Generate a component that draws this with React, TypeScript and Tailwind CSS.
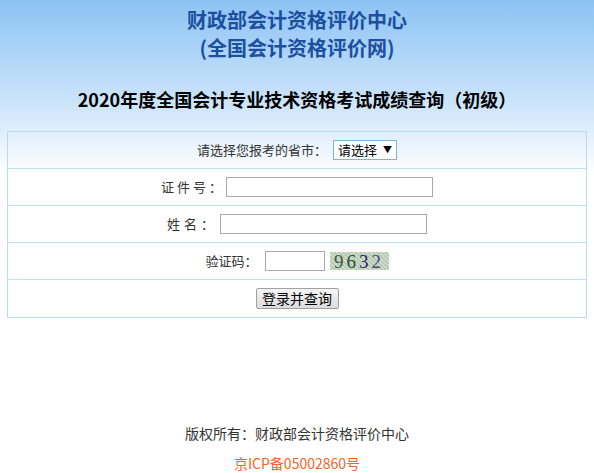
const font = { fontFamily: '"Noto Sans CJK SC", "Liberation Sans", sans-serif' };

function Row({ children, last }: { children: React.ReactNode; last?: boolean }) {
  return (
    <div
      className={
        "flex h-[37px] items-center justify-center " +
        (last ? "" : "border-b border-[#bfe2f3]")
      }
    >
      {children}
    </div>
  );
}

function TextInput({ width }: { width: string }) {
  return <div className={"h-[20px] border border-[#a9a9a9] bg-white " + width} />;
}

function Captcha() {
  return (
    <div className="ml-[5px] flex h-[18px] w-[59px] items-center justify-center bg-[repeating-linear-gradient(45deg,#c9d8c4_0px,#a9bfa6_1px,#dfe8da_2px,#b4c8b0_3px)]">
      <span
        className="text-[19px] leading-none tracking-[3px]"
        style={{ fontFamily: '"Liberation Serif", serif' }}
      >
        <span className="text-[#3d5a3a]">9</span>
        <span className="text-[#2f4a36]">6</span>
        <span className="text-[#2b2170]">3</span>
        <span className="text-[#4a4a6a]">2</span>
      </span>
    </div>
  );
}

export default function App() {
  return (
    <div
      className="min-h-[473px] w-full bg-[linear-gradient(#8cc3f4,#d7eafb_120px,#ffffff_175px)] text-[#333]"
      style={font}
    >
      <div className="flex flex-col items-center pt-[6px] text-[20px] font-bold leading-[28px] text-[#1c4f9e]">
        <div>财政部会计资格评价中心</div>
        <div>(全国会计资格评价网)</div>
      </div>
      <div className="mt-[24px] text-center text-[18px] font-bold leading-[26px] text-black">
        2020年度全国会计专业技术资格考试成绩查询（初级）
      </div>
      <div className="mx-[7px] mt-[19px] border border-[#b5dcf0] text-[13px]">
        <Row>
          <span className="mr-[6px]">请选择您报考的省市：</span>
          <div className="flex h-[20px] w-[64px] items-center justify-between border border-[#7eb2e8] bg-white pl-[4px] pr-[4px] text-[13px] text-black">
            <span>请选择</span>
            <span className="text-[9px]">▼</span>
          </div>
        </Row>
        <Row>
          <span className="mr-[1px] tracking-[3px]">证件号：</span>
          <TextInput width="w-[207px]" />
        </Row>
        <Row>
          <span className="mr-[2px] tracking-[4px]">姓名：</span>
          <TextInput width="w-[207px]" />
        </Row>
        <Row>
          <span className="mr-[7px]">验证码：</span>
          <TextInput width="w-[60px]" />
          <Captcha />
        </Row>
        <Row last>
          <div className="flex h-[21px] w-[83px] items-center justify-center rounded-[2px] border border-[#a0a0a0] bg-[linear-gradient(#f5f5f5,#dcdcdc)] text-[14px] text-black">
            登录并查询
          </div>
        </Row>
      </div>
      <div className="mt-[105px] text-center text-[14px] leading-[20px] text-[#333]">
        版权所有：财政部会计资格评价中心
      </div>
      <div className="mt-[10px] text-center text-[14px] leading-[20px] text-[#f5641e]">
        京ICP备05002860号
      </div>
    </div>
  );
}
